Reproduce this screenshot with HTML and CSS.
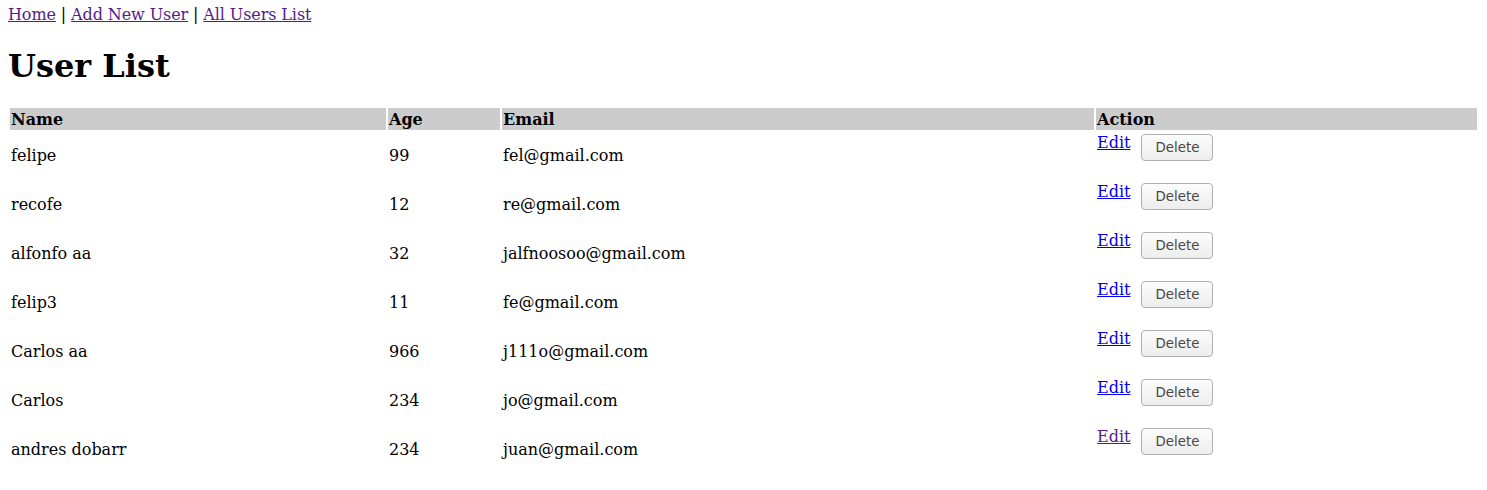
FILE: index.html
```html
<!DOCTYPE html>
<html>
<head>
<meta charset="utf-8">
<title>User List</title>
<link rel="stylesheet" href="styles.css">
</head>
<body>
<div class="nav"><a class="visited" href="#">Home</a> | <a class="visited" href="#">Add New User</a> | <a class="visited" href="#">All Users List</a></div>
<h1 class="title">User List</h1>
<table class="users">
  <colgroup>
    <col class="c-name"><col class="c-age"><col class="c-email"><col class="c-action">
  </colgroup>
  <thead>
    <tr><th>Name</th><th>Age</th><th>Email</th><th>Action</th></tr>
  </thead>
  <tbody>
    <tr><td>felipe</td><td>99</td><td>fel@gmail.com</td><td><div class="actions"><a href="#">Edit</a><form class="del"><button type="button" class="btn">Delete</button></form></div></td></tr>
    <tr><td>recofe</td><td>12</td><td>re@gmail.com</td><td><div class="actions"><a href="#">Edit</a><form class="del"><button type="button" class="btn">Delete</button></form></div></td></tr>
    <tr><td>alfonfo aa</td><td>32</td><td>jalfnoosoo@gmail.com</td><td><div class="actions"><a href="#">Edit</a><form class="del"><button type="button" class="btn">Delete</button></form></div></td></tr>
    <tr><td>felip3</td><td>11</td><td>fe@gmail.com</td><td><div class="actions"><a href="#">Edit</a><form class="del"><button type="button" class="btn">Delete</button></form></div></td></tr>
    <tr><td>Carlos aa</td><td>966</td><td>j111o@gmail.com</td><td><div class="actions"><a href="#">Edit</a><form class="del"><button type="button" class="btn">Delete</button></form></div></td></tr>
    <tr><td>Carlos</td><td>234</td><td>jo@gmail.com</td><td><div class="actions"><a href="#">Edit</a><form class="del"><button type="button" class="btn">Delete</button></form></div></td></tr>
    <tr><td>andres dobarr</td><td>234</td><td>juan@gmail.com</td><td><div class="actions"><a class="visited" href="#">Edit</a><form class="del"><button type="button" class="btn">Delete</button></form></div></td></tr>
  </tbody>
</table>
</body>
</html>
```
FILE: styles.css
```css
body {
  margin: 5px 8px 8px;
  font-family: "DejaVu Serif", serif;
  font-size: 16px;
  color: #000;
  background: #fff;
}
a { color: #0000ee; text-decoration: underline; }
a.visited { color: #551a8b; }
.nav {
  margin: 0;
  letter-spacing: -0.1px;
}
.title {
  font-size: 32px;
  font-weight: bold;
  margin: 23px 0 21px;
}
.users {
  width: 100%;
  border-collapse: separate;
  border-spacing: 2px;
  table-layout: fixed;
}
.c-name { width: 376px; }
.c-age { width: 112px; }
.c-email { width: 592px; }
.users th {
  background: #cccccc;
  text-align: left;
  font-weight: bold;
  padding: 2px 1px 1px;
}
.users td {
  padding: 1px;
  vertical-align: middle;
}
.actions {
  display: flex;
  align-items: flex-start;
  gap: 11px;
}
.del { margin: 0 0 17px; }
.btn {
  display: block;
  width: 72px;
  height: 27px;
  margin: 1px 0 0;
  padding: 0 6px;
  font-family: "DejaVu Sans", sans-serif;
  font-size: 13.33px;
  color: #4a4642;
  background: linear-gradient(#fcfcfc, #ededed);
  border: 1px solid #b0b0b0;
  border-radius: 4px;
}
```
